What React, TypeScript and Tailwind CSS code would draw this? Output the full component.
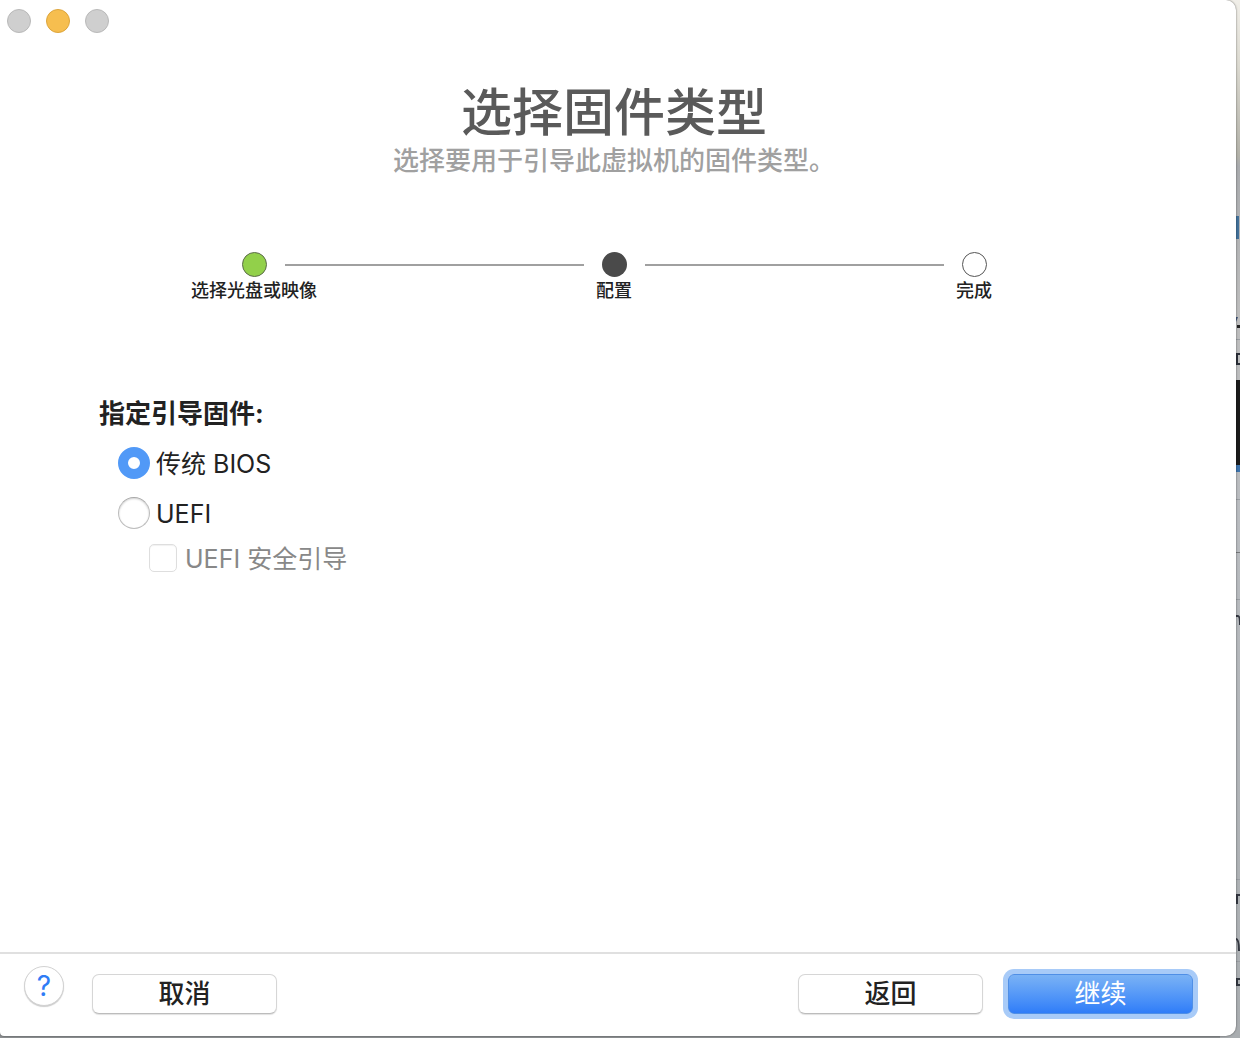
import React, { useState } from "react";

const steps = [
  { label: "选择光盘或映像", dot: "border border-[#5c6b4a] bg-[#92d04a]" },
  { label: "配置", dot: "bg-[#4a4a4a]" },
  { label: "完成", dot: "border border-[#555555] bg-white" },
];

const pushButton =
  "h-10 w-[185px] rounded-[7px] border border-[#d6d6d6] border-b-[#bcbcbc] bg-white text-[26px] leading-[38px] font-medium text-[#222222] shadow-[0_1px_1px_rgba(0,0,0,0.12)]";

function TrafficLights() {
  return (
    <div className="flex gap-[15px] px-[7px] pt-[9px]">
      <button
        type="button"
        aria-label="关闭"
        className="size-6 rounded-full border border-[#b9b9b9] bg-[#cfcfcf]"
      />
      <button
        type="button"
        aria-label="最小化"
        className="size-6 rounded-full border border-[#dda53c] bg-[#f6be4f]"
      />
      <button
        type="button"
        aria-label="缩放"
        className="size-6 rounded-full border border-[#b9b9b9] bg-[#cfcfcf]"
      />
    </div>
  );
}

function StepBar() {
  return (
    <ol className="mt-[73px] grid grid-cols-3 pr-[82px] pl-[74px]">
      {steps.map((step, i) => (
        <li key={step.label}>
          <div className="flex items-center gap-[18px]">
            <span className={i > 0 ? "h-0.5 flex-1 bg-[#a0a0a0]" : "h-0.5 flex-1"} />
            <span className={`size-[25px] rounded-full ${step.dot}`} />
            <span
              className={i < steps.length - 1 ? "h-0.5 flex-1 bg-[#a0a0a0]" : "h-0.5 flex-1"}
            />
          </div>
          <p className="text-center text-[18px] leading-[28px] font-medium text-[#222222]">
            {step.label}
          </p>
        </li>
      ))}
    </ol>
  );
}

// Slice of the desktop that shows past the right edge of the window
function Backdrop() {
  return (
    <svg
      aria-hidden="true"
      className="absolute top-0 right-0 h-full w-5"
      viewBox="0 0 20 1038"
      preserveAspectRatio="none"
    >
      <defs>
        <linearGradient id="desk" x1="0" y1="0" x2="0" y2="1">
          <stop offset="0" stopColor="#f0eee8" />
          <stop offset="0.06" stopColor="#dddbd2" />
          <stop offset="0.15" stopColor="#b3b2a9" />
          <stop offset="0.16" stopColor="#a9abae" />
          <stop offset="0.3" stopColor="#bdbdbd" />
          <stop offset="0.5" stopColor="#b9bcc0" />
          <stop offset="1" stopColor="#a9adb0" />
        </linearGradient>
      </defs>
      <rect width="20" height="1038" fill="url(#desk)" />
      <rect x="16" y="216" width="3" height="23" fill="#42719a" />
      <path d="M16 317h2l-2 5z" fill="#3f5478" />
      <rect x="17" y="325" width="3" height="3" fill="#222222" />
      <path d="M20 354h-3v10h3" fill="none" stroke="#2b2f38" strokeWidth="2" />
      <rect x="16" y="380" width="4" height="85" fill="#1b1b1b" />
      <rect x="16" y="465" width="4" height="7" fill="#3d73ac" />
      <path
        d="M16 339.500h4M16 499.500h4M16 599.500h4M16 879.500h4M16 961.500h4"
        stroke="#999da2"
      />
      <path d="M16 552.500h4" stroke="#77797b" />
      <path
        d="M16 616h2q2 0 2 9M17 904v-9h3M16 939q3 0 3 12M20 979h-3v6h3"
        fill="none"
        stroke="#333740"
        strokeWidth="2"
      />
    </svg>
  );
}

function App() {
  const [firmware, setFirmware] = useState("bios");
  const [secureBoot, setSecureBoot] = useState(false);

  const radio =
    "size-8 appearance-none rounded-full border border-[#bdbdbd] border-t-[#a8a8a8] bg-white shadow-[inset_0_1px_2px_rgba(0,0,0,0.18)] checked:border-[10px] checked:border-[#5199f7] checked:shadow-none";

  return (
    <div className="relative flex min-h-screen bg-[#8d9092] pr-1 pb-0.5 font-[Inter,'Noto_Sans_CJK_SC',sans-serif]">
      <Backdrop />
      <div className="relative flex flex-1 flex-col rounded-r-[10px] rounded-bl-[4px] bg-white shadow-[0_0_2px_rgba(0,0,0,0.6)]">
        <TrafficLights />

        <header className="mt-[50px] pr-2 text-center font-medium">
          <h1 className="text-[51px] leading-[60px] text-[#5a5a5a]">选择固件类型</h1>
          <p className="text-[26px] leading-[36px] text-[#a0a0a0]">
            选择要用于引导此虚拟机的固件类型。
          </p>
        </header>

        <StepBar />

        <fieldset className="mt-[91px] flex-1 px-[99px] text-[25px] leading-[32px] text-[#222222]">
          <legend className="text-[26px] leading-[36px] font-bold">指定引导固件:</legend>
          <div className="mt-[14px] ml-[19px] flex items-center gap-[6px]">
            <input
              id="bios"
              type="radio"
              name="firmware"
              className={radio}
              checked={firmware === "bios"}
              onChange={() => setFirmware("bios")}
            />
            <label htmlFor="bios" className="pt-0.5">
              传统 BIOS
            </label>
          </div>
          <div className="mt-4 ml-[19px] flex items-center gap-[6px]">
            <input
              id="uefi"
              type="radio"
              name="firmware"
              className={radio}
              checked={firmware === "uefi"}
              onChange={() => setFirmware("uefi")}
            />
            <label htmlFor="uefi" className="pt-0.5">
              UEFI
            </label>
          </div>
          <div className="mt-[11px] ml-[50px] flex items-center gap-2">
            <input
              id="secure-boot"
              type="checkbox"
              className="size-7 appearance-none rounded-[5px] border border-[#dedede] bg-white shadow-[inset_0_1px_1px_rgba(0,0,0,0.06)] checked:bg-[#5199f7]"
              disabled={firmware !== "uefi"}
              checked={secureBoot}
              onChange={(e) => setSecureBoot(e.target.checked)}
            />
            <label
              htmlFor="secure-boot"
              className={firmware === "uefi" ? "pt-0.5" : "pt-0.5 text-[#888888]"}
            >
              UEFI 安全引导
            </label>
          </div>
        </fieldset>

        <footer className="flex items-start border-t-2 border-[#e0e0e0] pt-3 pr-[43px] pb-[22px] pl-6">
          <button
            type="button"
            aria-label="帮助"
            className="flex size-10 items-center justify-center rounded-full border border-[#d2d2d2] bg-white text-[28px] text-[#2f7cf6] shadow-[0_1px_1px_rgba(0,0,0,0.2)]"
          >
            ?
          </button>
          <div className="flex flex-1 pt-2 pl-7">
            <button type="button" className={pushButton}>
              取消
            </button>
            <button type="button" className={`${pushButton} ml-auto`}>
              返回
            </button>
            <button
              type="submit"
              className="ml-[25px] h-10 w-[185px] rounded-[6px] border border-[#4f8fe6] bg-linear-to-b from-[#7ab2f5] to-[#2f7df8] text-[26px] leading-[38px] text-white ring-[5px] ring-[#a8cbf8]"
            >
              继续
            </button>
          </div>
        </footer>
      </div>
    </div>
  );
}

export default App;
